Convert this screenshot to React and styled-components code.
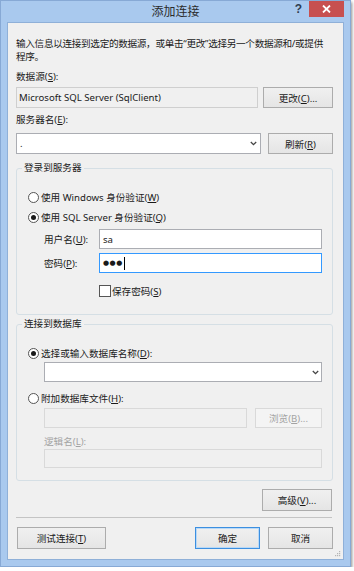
import React from 'react';
import styled, { createGlobalStyle } from 'styled-components';

const FONT = `"Noto Sans", "Noto Sans CJK SC", sans-serif`;

const Global = createGlobalStyle`
  html, body { margin: 0; padding: 0; background: #ffffff; }
  body { font-family: ${FONT}; font-size: 9.6px; color: #1a1a1a; }
  * { box-sizing: border-box; }
`;

const Window = styled.div`
  width: 351px;
  height: 567px;
  background: #a9c9ee;
  border: 1px solid #87a9d5;
  box-shadow: 1px 2px 3px rgba(0, 0, 0, 0.45);
  padding: 0 6px 6px 6px;
  display: flex;
  flex-direction: column;
`;

const TitleBar = styled.div`
  height: 21px;
  flex: none;
  display: grid;
  grid-template-columns: 1fr auto 1fr;
  align-items: center;
`;

const Title = styled.div`
  grid-column: 2;
  font-size: 12px;
  line-height: 21px;
  color: #2b2b2b;
`;

const Controls = styled.div`
  grid-column: 3;
  justify-self: end;
  align-self: start;
  display: flex;
  align-items: center;
  height: 16px;
`;

const Help = styled.span`
  font: bold 12px "Liberation Sans", sans-serif;
  color: #2f3d52;
  margin-right: 7px;
`;

const Close = styled.div`
  width: 35px;
  height: 16px;
  background: #c75050;
  display: flex;
  align-items: center;
  justify-content: center;
`;

const Body = styled.div`
  position: relative;
  flex: 1;
  background: #f0f0f0;
  border: 1px solid #8fb0d8;
  padding: 14px 10px 10px 8px;
  display: flex;
  flex-direction: column;
`;

const Intro = styled.p`
  margin: 0;
  line-height: 13px;
  white-space: nowrap;
  letter-spacing: -0.3px;
`;

const Label = styled.div`
  line-height: 14px;
  margin-top: ${(p) => p.$mt || 0}px;
  padding-left: ${(p) => p.$indent || 0}px;
  color: ${(p) => (p.$disabled ? '#a3a3a3' : '#1a1a1a')};
  white-space: nowrap;
`;

const Row = styled.div`
  display: flex;
  align-items: center;
  gap: ${(p) => p.$gap || 0}px;
  margin-top: ${(p) => p.$mt || 0}px;
  padding-left: ${(p) => p.$indent || 0}px;
  height: ${(p) => p.$h || 20}px;
`;

const boxStyles = {
  normal: { bg: '#ffffff', bd: '#abadb3' },
  readonly: { bg: '#f0f0f0', bd: '#cfcfcf' },
  focus: { bg: '#ffffff', bd: '#3399ff' },
  disabled: { bg: '#f0f0f0', bd: '#d9d9d9' },
};

const TextBox = styled.div`
  height: 100%;
  flex: 1;
  min-width: 0;
  background: ${(p) => boxStyles[p.$variant || 'normal'].bg};
  border: 1px solid ${(p) => boxStyles[p.$variant || 'normal'].bd};
  display: flex;
  align-items: center;
  padding: 0 ${(p) => p.$pad ?? 2}px;
  white-space: nowrap;
  overflow: hidden;
`;

const Chevron = styled.svg`
  margin-left: auto;
  flex: none;
`;

const Button = styled.button`
  height: ${(p) => p.$h || 22}px;
  width: ${(p) => p.$w}px;
  flex: none;
  padding: 0;
  font-family: ${FONT};
  font-size: 9.6px;
  color: ${(p) => (p.disabled ? '#a3a3a3' : '#1a1a1a')};
  border: 1px solid ${(p) => (p.disabled ? '#d9d9d9' : p.$primary ? '#3c8fe0' : '#acacac')};
  background: ${(p) => (p.disabled ? '#f4f4f4' : 'linear-gradient(#f0f0f0, #e5e5e5)')};
  box-shadow: ${(p) => (p.$primary ? 'inset 0 0 0 1px #b9d9f7' : 'none')};
  margin-left: ${(p) => p.$ml || 0}px;
  margin-right: ${(p) => p.$mr || 0}px;
`;

const Group = styled.fieldset`
  margin: ${(p) => p.$mt}px 0 0 0;
  padding: ${(p) => p.$pt}px 10px ${(p) => p.$pb}px 11px;
  border: 1px solid #d5dfe5;
  border-radius: 3px;
  min-width: 0;
`;

const Legend = styled.legend`
  margin-left: -6px;
  padding: 0 2px;
  line-height: 14px;
  color: #1a1a1a;
`;

const Option = styled.div`
  display: flex;
  align-items: center;
  gap: 2px;
  height: ${(p) => p.$h || 20}px;
  margin-top: ${(p) => p.$mt || 0}px;
  white-space: nowrap;
`;

const Radio = styled.span`
  width: 11px;
  height: 11px;
  border-radius: 50%;
  border: 1px solid #555555;
  background: #ffffff;
  flex: none;
  display: flex;
  align-items: center;
  justify-content: center;
  &::after {
    content: '';
    width: 5px;
    height: 5px;
    border-radius: 50%;
    background: #1a1a1a;
    display: ${(p) => (p.$checked ? 'block' : 'none')};
  }
`;

const Check = styled.span`
  width: 12px;
  height: 12px;
  border: 1px solid #555555;
  background: #ffffff;
  flex: none;
`;

const Text = styled.span`
  white-space: nowrap;
`;

const FieldName = styled.span`
  width: 55px;
  flex: none;
  white-space: nowrap;
`;

const Dots = styled.span`
  font-family: "DejaVu Sans", sans-serif;
  font-size: 7px;
  letter-spacing: 0.5px;
  color: #1a1a1a;
`;

const Caret = styled.span`
  width: 1px;
  height: 13px;
  background: #000;
  margin-left: 1px;
`;

const Separator = styled.div`
  height: 1px;
  background: #c4c4c4;
  margin-top: 6px;
  margin-right: 1px;
`;

const ButtonRow = styled.div`
  display: flex;
  margin-top: 9px;
  padding-left: 1px;
`;

const Spacer = styled.div`
  flex: 1;
`;

const Grip = styled.svg`
  position: absolute;
  right: 2px;
  bottom: 2px;
`;

const U = styled.span`
  text-decoration: underline;
  text-underline-offset: 1px;
`;

const ChevronIcon = ({ color = '#444' }) => (
  <Chevron width="7" height="5" viewBox="0 0 7 5">
    <path d="M0.8 1 L3.5 3.7 L6.2 1" fill="none" stroke={color} strokeWidth="1.3" />
  </Chevron>
);

export default function App() {
  return (
    <>
      <Global />
      <Window>
        <TitleBar>
          <Title>添加连接</Title>
          <Controls>
            <Help>?</Help>
            <Close>
              <svg width="9" height="8" viewBox="0 0 9 8">
                <path d="M1 0.5 L8 7.5 M8 0.5 L1 7.5" stroke="#fff" strokeWidth="1.8" />
              </svg>
            </Close>
          </Controls>
        </TitleBar>
        <Body>
          <Intro>
            输入信息以连接到选定的数据源，或单击“更改”选择另一个数据源和/或提供
            <br />
            程序。
          </Intro>
          <Label $mt={7}>
            数据源(<U>S</U>):
          </Label>
          <Row $mt={3} $h={21} $gap={5}>
            <TextBox $variant="readonly" $pad={2}>
              <Text>Microsoft SQL Server (SqlClient)</Text>
            </TextBox>
            <Button $w={70} $h={21}>
              更改(<U>C</U>)...
            </Button>
          </Row>
          <Label $mt={5}>
            服务器名(<U>E</U>):
          </Label>
          <Row $mt={6} $h={21} $gap={7}>
            <TextBox $pad={3}>
              <Text>.</Text>
              <ChevronIcon />
            </TextBox>
            <Button $w={65} $h={21}>
              刷新(<U>R</U>)
            </Button>
          </Row>

          <Group $mt={7} $pt={12} $pb={16}>
            <Legend>登录到服务器</Legend>
            <Option>
              <Radio />
              <Text>
                使用 Windows 身份验证(<U>W</U>)
              </Text>
            </Option>
            <Option>
              <Radio $checked />
              <Text>
                使用 SQL Server 身份验证(<U>Q</U>)
              </Text>
            </Option>
            <Row $mt={2} $indent={16}>
              <FieldName>
                用户名(<U>U</U>):
              </FieldName>
              <TextBox $pad={3}>
                <Text>sa</Text>
              </TextBox>
            </Row>
            <Row $mt={4} $indent={16}>
              <FieldName>
                密码(<U>P</U>):
              </FieldName>
              <TextBox $variant="focus" $pad={3}>
                <Dots>●●●</Dots>
                <Caret />
              </TextBox>
            </Row>
            <Row $mt={11} $h={14} $indent={71} $gap={1}>
              <Check />
              <Text>
                保存密码(<U>S</U>)
              </Text>
            </Row>
          </Group>

          <Group $mt={2} $pt={14} $pb={12}>
            <Legend>连接到数据库</Legend>
            <Option $h={16}>
              <Radio $checked />
              <Text>
                选择或输入数据库名称(<U>D</U>):
              </Text>
            </Option>
            <Row $mt={1} $indent={16}>
              <TextBox>
                <ChevronIcon />
              </TextBox>
            </Row>
            <Option $h={16} $mt={8}>
              <Radio />
              <Text>
                附加数据库文件(<U>H</U>):
              </Text>
            </Option>
            <Row $mt={2} $indent={16} $gap={8}>
              <TextBox $variant="disabled" />
              <Button $w={67} $h={20} disabled>
                浏览(<U>B</U>)...
              </Button>
            </Row>
            <Label $mt={7} $disabled $indent={16}>
              逻辑名(<U>L</U>):
            </Label>
            <Row $h={19} $indent={16}>
              <TextBox $variant="disabled" />
            </Row>
          </Group>

          <Row $mt={8} $h={22}>
            <Spacer />
            <Button $w={70} $mr={1}>
              高级(<U>V</U>)...
            </Button>
          </Row>
          <Separator />
          <ButtonRow>
            <Button $w={89}>
              测试连接(<U>T</U>)
            </Button>
            <Spacer />
            <Button $w={65} $primary>
              确定
            </Button>
            <Button $w={65} $ml={8}>
              取消
            </Button>
          </ButtonRow>
          <Grip width="7" height="7" viewBox="0 0 7 7">
            <g fill="#b5b5b5">
              <rect x="5" y="1" width="1.2" height="1.2" />
              <rect x="3" y="3" width="1.2" height="1.2" />
              <rect x="5" y="3" width="1.2" height="1.2" />
              <rect x="1" y="5" width="1.2" height="1.2" />
              <rect x="3" y="5" width="1.2" height="1.2" />
              <rect x="5" y="5" width="1.2" height="1.2" />
            </g>
          </Grip>
        </Body>
      </Window>
    </>
  );
}
